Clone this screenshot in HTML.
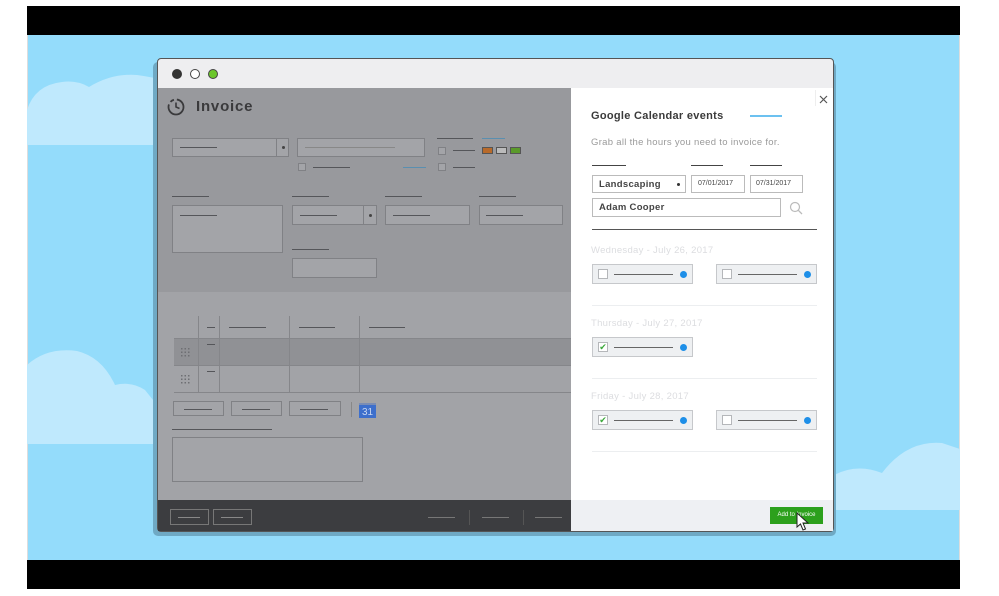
<!DOCTYPE html>
<html><head><meta charset="utf-8"><style>
*{margin:0;padding:0;box-sizing:border-box}
body{width:999px;height:596px;background:#fff;position:relative;overflow:hidden;font-family:"Liberation Sans",sans-serif}
.a{position:absolute}
.ln{position:absolute;height:1px;background:#55565a}
.bx{position:absolute;border:1px solid #808185;background:#a3a4a8}
.rb{position:absolute;border:1px solid #c8cacd;background:#fff}
.it{position:absolute;border:1px solid #c6c8cb;background:#eef0f2;height:20px;width:101px}
.it .cb{position:absolute;left:5px;top:4px;width:10px;height:10px;border:1px solid #b5b7ba;background:#fff}
.it .l{position:absolute;left:21px;top:9px;width:59px;height:1px;background:#666}
.it .d{position:absolute;left:87px;top:6px;width:7px;height:7px;border-radius:50%;background:#1e8fe8}
.day{position:absolute;left:591px;font-size:9.5px;color:#dcdde0;letter-spacing:.3px}
.sep{position:absolute;left:592px;width:225px;height:1px;background:#eceef0}
</style></head><body>
<div class="a" style="left:27px;top:6px;width:933px;height:583px;background:#94dcfb;border:1px solid #ddd"></div>
<div class="a" style="left:27px;top:6px;width:933px;height:29px;background:#000"></div>
<div class="a" style="left:27px;top:560px;width:933px;height:29px;background:#000"></div>
<svg class="a" style="left:27px;top:35px" width="933" height="525">
<path d="M0 110 L0 75 Q8 50 35 47 Q50 45 62 52 Q85 38 110 40 Q125 42 135 45 L135 110Z" fill="#bfe9fd"/>
<path d="M0 409 L0 330 Q20 312 50 316 Q75 322 88 350 Q105 346 118 355 L130 370 L135 409Z" fill="#bfe9fd"/>
<path d="M807 475 L807 440 Q830 428 855 438 Q880 405 915 408 L933 414 L933 475Z" fill="#bfe9fd"/>
</svg>
<div class="a" style="left:153px;top:62px;width:683px;height:474px;background:#6fa9c4;border-radius:5px"></div>
<div class="a" style="left:157px;top:58px;width:677px;height:474px;background:#eeeef0;border:1px solid #555;border-radius:4px;overflow:hidden"></div>
<div class="a" style="left:172px;top:69px;width:10px;height:10px;border-radius:50%;background:#333"></div>
<div class="a" style="left:190px;top:69px;width:10px;height:10px;border-radius:50%;background:#fff;border:1px solid #444"></div>
<div class="a" style="left:208px;top:69px;width:10px;height:10px;border-radius:50%;background:#6bc62b;border:1px solid #444"></div>
<div class="a" style="left:158px;top:88px;width:413px;height:204px;background:#98999d"></div>
<div class="a" style="left:158px;top:292px;width:413px;height:208px;background:#a2a3a7"></div>
<div class="a" style="left:158px;top:500px;width:413px;height:31px;background:#3c3d40"></div>
<svg class="a" style="left:166px;top:97px" width="20" height="20"><circle cx="10" cy="10" r="7.5" fill="none" stroke="#3a3a3c" stroke-width="1.8" stroke-dasharray="26 3 4 3"/><path d="M10 5.5v4.5l3.5 1.5" stroke="#3a3a3c" stroke-width="1.6" fill="none"/></svg>
<div class="a" style="left:196px;top:98px;font-size:15px;font-weight:bold;color:#3a3a3c;letter-spacing:.8px">Invoice</div>
<div class="bx" style="left:172px;top:138px;width:117px;height:19px"></div><div class="a" style="left:276px;top:138px;width:1px;height:19px;background:#808185"></div><div class="a" style="left:282px;top:146px;width:3px;height:3px;background:#444;border-radius:50%"></div><div class="ln" style="left:180px;top:147px;width:37px"></div>
<div class="bx" style="left:297px;top:138px;width:128px;height:19px"></div><div class="ln" style="left:305px;top:147px;width:90px;background:#888"></div>
<div class="ln" style="left:437px;top:138px;width:36px"></div><div class="ln" style="left:482px;top:138px;width:23px;background:#5a8fb0"></div>
<div class="bx" style="left:438px;top:147px;width:8px;height:8px"></div><div class="ln" style="left:453px;top:150px;width:22px"></div>
<div class="a" style="left:482px;top:147px;width:11px;height:7px;background:#b86a2a;border:1px solid #555"></div><div class="a" style="left:496px;top:147px;width:11px;height:7px;background:#bbb;border:1px solid #555"></div><div class="a" style="left:510px;top:147px;width:11px;height:7px;background:#5a9a2a;border:1px solid #555"></div>
<div class="bx" style="left:298px;top:163px;width:8px;height:8px"></div><div class="ln" style="left:313px;top:167px;width:37px"></div><div class="ln" style="left:403px;top:167px;width:23px;background:#5a8fb0"></div>
<div class="bx" style="left:438px;top:163px;width:8px;height:8px"></div><div class="ln" style="left:453px;top:167px;width:22px"></div>
<div class="ln" style="left:172px;top:196px;width:37px"></div><div class="ln" style="left:292px;top:196px;width:37px"></div><div class="ln" style="left:385px;top:196px;width:37px"></div><div class="ln" style="left:479px;top:196px;width:37px"></div>
<div class="bx" style="left:172px;top:205px;width:111px;height:48px"></div><div class="ln" style="left:180px;top:215px;width:37px"></div>
<div class="bx" style="left:292px;top:205px;width:85px;height:20px"></div><div class="a" style="left:363px;top:205px;width:1px;height:20px;background:#808185"></div><div class="a" style="left:369px;top:214px;width:3px;height:3px;background:#444;border-radius:50%"></div><div class="ln" style="left:300px;top:215px;width:37px"></div>
<div class="bx" style="left:385px;top:205px;width:85px;height:20px"></div><div class="ln" style="left:393px;top:215px;width:37px"></div>
<div class="bx" style="left:479px;top:205px;width:84px;height:20px"></div><div class="ln" style="left:486px;top:215px;width:37px"></div>
<div class="ln" style="left:292px;top:249px;width:37px"></div><div class="bx" style="left:292px;top:258px;width:85px;height:20px"></div>
<div class="a" style="left:174px;top:338px;width:397px;height:27px;background:#909195"></div>
<div class="a" style="left:174px;top:338px;width:397px;height:1px;background:#85868a"></div>
<div class="a" style="left:174px;top:365px;width:397px;height:1px;background:#85868a"></div>
<div class="a" style="left:174px;top:392px;width:397px;height:1px;background:#85868a"></div>
<div class="a" style="left:198px;top:316px;width:1px;height:76px;background:#85868a"></div>
<div class="a" style="left:219px;top:316px;width:1px;height:76px;background:#85868a"></div>
<div class="a" style="left:289px;top:316px;width:1px;height:76px;background:#85868a"></div>
<div class="a" style="left:359px;top:316px;width:1px;height:76px;background:#85868a"></div>
<div class="ln" style="left:207px;top:327px;width:8px"></div><div class="ln" style="left:229px;top:327px;width:37px"></div><div class="ln" style="left:299px;top:327px;width:36px"></div><div class="ln" style="left:369px;top:327px;width:36px"></div>
<div class="ln" style="left:207px;top:344px;width:8px"></div><div class="ln" style="left:207px;top:371px;width:8px"></div>
<div class="a" style="left:180px;top:347px;width:10px;height:10px;background-image:radial-gradient(#6e6f73 0.8px,transparent 1px);background-size:3.5px 3.5px"></div>
<div class="a" style="left:180px;top:374px;width:10px;height:10px;background-image:radial-gradient(#6e6f73 0.8px,transparent 1px);background-size:3.5px 3.5px"></div>
<div class="bx" style="left:173px;top:401px;width:51px;height:15px"></div><div class="ln" style="left:184px;top:409px;width:28px"></div>
<div class="bx" style="left:231px;top:401px;width:51px;height:15px"></div><div class="ln" style="left:242px;top:409px;width:28px"></div>
<div class="bx" style="left:289px;top:401px;width:52px;height:15px"></div><div class="ln" style="left:300px;top:409px;width:28px"></div>
<div class="a" style="left:351px;top:402px;width:1px;height:15px;background:#888"></div>
<div class="a" style="left:359px;top:403px;width:17px;height:15px;background:#3d6fcc;color:#c9d6f0;font-size:10px;text-align:center;line-height:15px;border-top:2px solid #7a8db5">31</div>
<div class="ln" style="left:172px;top:429px;width:100px"></div>
<div class="bx" style="left:172px;top:437px;width:191px;height:45px"></div>
<div class="a" style="left:170px;top:509px;width:39px;height:16px;border:1px solid #777"></div><div class="ln" style="left:178px;top:517px;width:22px;background:#888"></div>
<div class="a" style="left:213px;top:509px;width:39px;height:16px;border:1px solid #777"></div><div class="ln" style="left:221px;top:517px;width:22px;background:#888"></div>
<div class="ln" style="left:428px;top:517px;width:27px;background:#777"></div><div class="ln" style="left:482px;top:517px;width:27px;background:#777"></div><div class="ln" style="left:535px;top:517px;width:27px;background:#777"></div>
<div class="a" style="left:469px;top:510px;width:1px;height:15px;background:#555"></div><div class="a" style="left:523px;top:510px;width:1px;height:15px;background:#555"></div>
<div class="a" style="left:571px;top:88px;width:262px;height:412px;background:#fff"></div>
<div class="a" style="left:571px;top:500px;width:262px;height:31px;background:#eef0f3"></div>
<div class="a" style="left:815px;top:90px;width:1px;height:16px;background:#eee"></div>
<svg class="a" style="left:819px;top:95px" width="9" height="9"><path d="M1 1L8 8M8 1L1 8" stroke="#555" stroke-width="1.2"/></svg>
<div class="a" style="left:591px;top:110px;font-size:11px;font-weight:bold;color:#3a3a3a;letter-spacing:.3px">Google Calendar events</div>
<div class="a" style="left:750px;top:115px;width:32px;height:2px;background:#6cc1f0"></div>
<div class="a" style="left:591px;top:137px;font-size:9.5px;color:#9a9a9a;letter-spacing:.3px">Grab all the hours you need to invoice for.</div>
<div class="ln" style="left:592px;top:165px;width:34px;background:#444"></div><div class="ln" style="left:691px;top:165px;width:32px;background:#444"></div><div class="ln" style="left:750px;top:165px;width:32px;background:#444"></div>
<div class="rb" style="left:592px;top:175px;width:94px;height:18px;border-color:#bbb"></div><div class="a" style="left:599px;top:179px;font-size:9.5px;font-weight:bold;color:#444;letter-spacing:.3px">Landscaping</div><div class="a" style="left:677px;top:183px;width:3px;height:3px;border-radius:50%;background:#333"></div>
<div class="rb" style="left:691px;top:175px;width:54px;height:18px;border-color:#bbb"></div><div class="a" style="left:698px;top:180px;font-size:7px;color:#444">07/01/2017</div>
<div class="rb" style="left:750px;top:175px;width:53px;height:18px;border-color:#bbb"></div><div class="a" style="left:756px;top:180px;font-size:7px;color:#444">07/31/2017</div>
<div class="rb" style="left:592px;top:198px;width:189px;height:19px;border-color:#bbb"></div><div class="a" style="left:599px;top:202px;font-size:9.5px;font-weight:bold;color:#444;letter-spacing:.3px">Adam Cooper</div>
<svg class="a" style="left:789px;top:201px" width="14" height="14"><circle cx="6" cy="6" r="4.5" fill="none" stroke="#bbb" stroke-width="1.2"/><path d="M9.3 9.3L13 13" stroke="#bbb" stroke-width="1.3"/></svg>
<div class="a" style="left:592px;top:229px;width:225px;height:1px;background:#555"></div>
<div class="day" style="top:245px">Wednesday - July 26, 2017</div>
<div class="it" style="left:592px;top:264px"><div class="cb"></div><div class="l"></div><div class="d"></div></div>
<div class="it" style="left:716px;top:264px"><div class="cb"></div><div class="l"></div><div class="d"></div></div>
<div class="sep" style="top:305px"></div>
<div class="day" style="top:318px">Thursday - July 27, 2017</div>
<div class="it" style="left:592px;top:337px"><div class="cb" style="color:#3aa83a;font-size:9px;line-height:8px;text-align:center">✔</div><div class="l"></div><div class="d"></div></div>
<div class="sep" style="top:378px"></div>
<div class="day" style="top:391px">Friday - July 28, 2017</div>
<div class="it" style="left:592px;top:410px"><div class="cb" style="color:#3aa83a;font-size:9px;line-height:8px;text-align:center">✔</div><div class="l"></div><div class="d"></div></div>
<div class="it" style="left:716px;top:410px"><div class="cb"></div><div class="l"></div><div class="d"></div></div>
<div class="sep" style="top:451px"></div>
<div class="a" style="left:770px;top:507px;width:53px;height:17px;background:#2ca01c;color:#fff;font-size:6px;text-align:center;line-height:17px">Add to Invoice</div>
<svg class="a" style="left:796px;top:512px" width="14" height="20"><path d="M1 1L1 15L4.5 12L7 18L9.5 17L7 11L12 11Z" fill="#fff" stroke="#222" stroke-width="1"/></svg>
</body></html>
